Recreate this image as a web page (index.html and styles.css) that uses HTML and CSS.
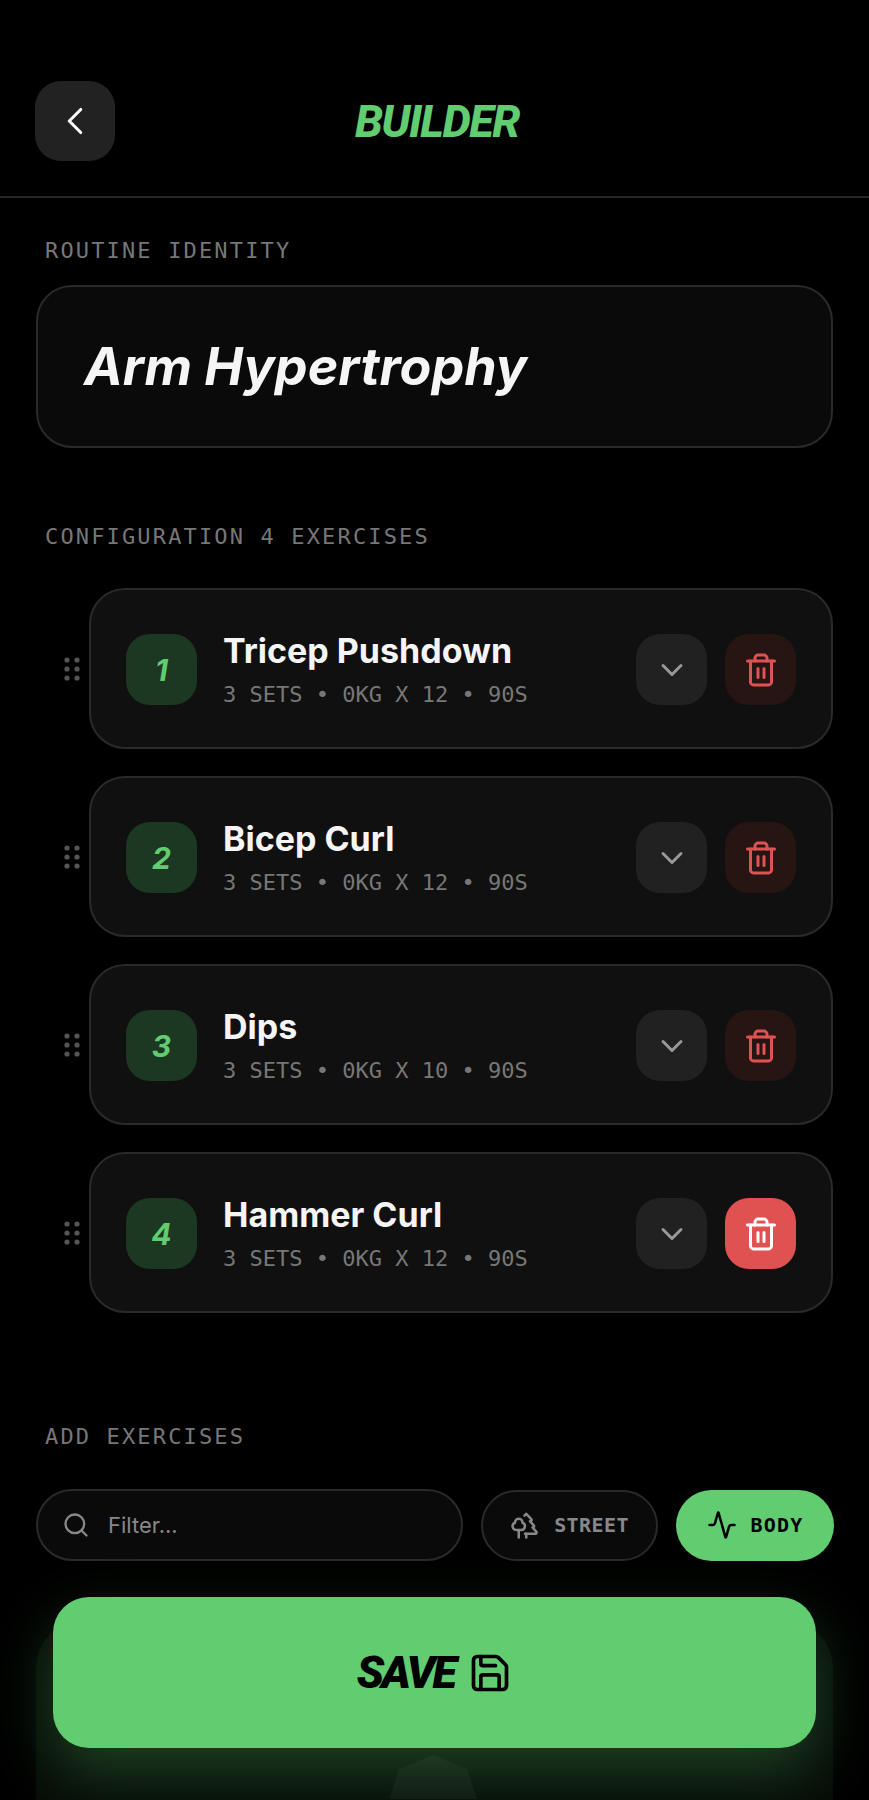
FILE: index.html
```html
<!DOCTYPE html>
<html lang="en">
  <head>
    <meta charset="UTF-8" />
    <meta name="viewport" content="width=device-width, initial-scale=1.0" />
    <title>Builder</title>
    <link rel="stylesheet" href="styles.css">
  </head>
  <body>
    <div class="page">
      <header class="top-bar">
        <button class="back-btn">
          <svg class="icon" width="46" height="46" viewBox="0 0 24 24"><path d="m15 18-6-6 6-6" /></svg>
        </button>
        <h1 class="brand">BUILDER</h1>
      </header>

      <main class="content">
        <div class="label label-routine">ROUTINE IDENTITY</div>
        <div class="identity"><span class="identity-name">Arm Hypertrophy</span></div>

        <div class="label label-config">CONFIGURATION 4 EXERCISES</div>
        <div class="exercise-list">
          <div class="exercise-row">
            <div class="grip">
              <svg width="16" height="24" viewBox="0 0 16 24"><circle cx="3" cy="3" r="2.6" /><circle cx="13" cy="3" r="2.6" /><circle cx="3" cy="12" r="2.6" /><circle cx="13" cy="12" r="2.6" /><circle cx="3" cy="21" r="2.6" /><circle cx="13" cy="21" r="2.6" /></svg>
            </div>
            <div class="exercise-card">
              <div class="num">1</div>
              <div class="exercise-info">
                <div class="exercise-name">Tricep Pushdown</div>
                <div class="exercise-meta">3 SETS • 0KG X 12 • 90S</div>
              </div>
              <button class="square-btn expand"><svg class="icon" width="36" height="36" viewBox="0 0 24 24"><path d="m6 9 6 6 6-6" /></svg></button>
              <button class="square-btn trash"><svg class="icon" width="36" height="36" viewBox="0 0 24 24"><path d="M3 6h18" /><path d="M19 6v14c0 1-1 2-2 2H7c-1 0-2-1-2-2V6" /><path d="M8 6V4c0-1 1-2 2-2h4c1 0 2 1 2 2v2" /><path d="M10 11v6" /><path d="M14 11v6" /></svg></button>
            </div>
          </div>
          <div class="exercise-row">
            <div class="grip">
              <svg width="16" height="24" viewBox="0 0 16 24"><circle cx="3" cy="3" r="2.6" /><circle cx="13" cy="3" r="2.6" /><circle cx="3" cy="12" r="2.6" /><circle cx="13" cy="12" r="2.6" /><circle cx="3" cy="21" r="2.6" /><circle cx="13" cy="21" r="2.6" /></svg>
            </div>
            <div class="exercise-card">
              <div class="num">2</div>
              <div class="exercise-info">
                <div class="exercise-name">Bicep Curl</div>
                <div class="exercise-meta">3 SETS • 0KG X 12 • 90S</div>
              </div>
              <button class="square-btn expand"><svg class="icon" width="36" height="36" viewBox="0 0 24 24"><path d="m6 9 6 6 6-6" /></svg></button>
              <button class="square-btn trash"><svg class="icon" width="36" height="36" viewBox="0 0 24 24"><path d="M3 6h18" /><path d="M19 6v14c0 1-1 2-2 2H7c-1 0-2-1-2-2V6" /><path d="M8 6V4c0-1 1-2 2-2h4c1 0 2 1 2 2v2" /><path d="M10 11v6" /><path d="M14 11v6" /></svg></button>
            </div>
          </div>
          <div class="exercise-row">
            <div class="grip">
              <svg width="16" height="24" viewBox="0 0 16 24"><circle cx="3" cy="3" r="2.6" /><circle cx="13" cy="3" r="2.6" /><circle cx="3" cy="12" r="2.6" /><circle cx="13" cy="12" r="2.6" /><circle cx="3" cy="21" r="2.6" /><circle cx="13" cy="21" r="2.6" /></svg>
            </div>
            <div class="exercise-card">
              <div class="num">3</div>
              <div class="exercise-info">
                <div class="exercise-name">Dips</div>
                <div class="exercise-meta">3 SETS • 0KG X 10 • 90S</div>
              </div>
              <button class="square-btn expand"><svg class="icon" width="36" height="36" viewBox="0 0 24 24"><path d="m6 9 6 6 6-6" /></svg></button>
              <button class="square-btn trash"><svg class="icon" width="36" height="36" viewBox="0 0 24 24"><path d="M3 6h18" /><path d="M19 6v14c0 1-1 2-2 2H7c-1 0-2-1-2-2V6" /><path d="M8 6V4c0-1 1-2 2-2h4c1 0 2 1 2 2v2" /><path d="M10 11v6" /><path d="M14 11v6" /></svg></button>
            </div>
          </div>
          <div class="exercise-row">
            <div class="grip">
              <svg width="16" height="24" viewBox="0 0 16 24"><circle cx="3" cy="3" r="2.6" /><circle cx="13" cy="3" r="2.6" /><circle cx="3" cy="12" r="2.6" /><circle cx="13" cy="12" r="2.6" /><circle cx="3" cy="21" r="2.6" /><circle cx="13" cy="21" r="2.6" /></svg>
            </div>
            <div class="exercise-card">
              <div class="num">4</div>
              <div class="exercise-info">
                <div class="exercise-name">Hammer Curl</div>
                <div class="exercise-meta">3 SETS • 0KG X 12 • 90S</div>
              </div>
              <button class="square-btn expand"><svg class="icon" width="36" height="36" viewBox="0 0 24 24"><path d="m6 9 6 6 6-6" /></svg></button>
              <button class="square-btn trash active"><svg class="icon" width="36" height="36" viewBox="0 0 24 24"><path d="M3 6h18" /><path d="M19 6v14c0 1-1 2-2 2H7c-1 0-2-1-2-2V6" /><path d="M8 6V4c0-1 1-2 2-2h4c1 0 2 1 2 2v2" /><path d="M10 11v6" /><path d="M14 11v6" /></svg></button>
            </div>
          </div>
        </div>

        <div class="label label-add">ADD EXERCISES</div>
        <div class="filter-row">
          <div class="filter-input">
            <svg class="icon" width="28" height="28" viewBox="0 0 24 24"><circle cx="11" cy="11" r="8" /><path d="m21 21-4.3-4.3" /></svg>
            <span>Filter...</span>
          </div>
          <button class="pill street">
            <svg class="icon" width="30" height="30" viewBox="0 0 24 24"><path d="M10 10v.2A3 3 0 0 1 8.9 16H5a3 3 0 0 1-1-5.8V10a3 3 0 0 1 6 0Z" /><path d="M7 16v6" /><path d="M13 19v3" /><path d="M12 19h8.3a1 1 0 0 0 .7-1.7L18 14h.3a1 1 0 0 0 .7-1.7L16 9h.2a1 1 0 0 0 .8-1.7L13 3l-1.4 1.5" /></svg>
            STREET
          </button>
          <button class="pill body-pill">
            <svg class="icon" width="30" height="30" viewBox="0 0 24 24"><path d="M22 12h-2.48a2 2 0 0 0-1.93 1.46l-2.35 8.36a.25.25 0 0 1-.48 0L9.24 2.18a.25.25 0 0 0-.48 0l-2.35 8.36A2 2 0 0 1 4.49 12H2" /></svg>
            BODY
          </button>
        </div>
      </main>

      <!-- card peeking out behind the save button -->
      <div class="ghost-card">
        <svg class="ghost-figure" width="88" height="44" viewBox="0 0 88 44"><polygon points="44,0 78,14 88,44 0,44 10,14" /></svg>
      </div>

      <button class="save-btn">
        <span>SAVE</span>
        <svg class="icon" width="44" height="44" viewBox="0 0 24 24"><path d="M15.2 3a2 2 0 0 1 1.4.6l3.8 3.8a2 2 0 0 1 .6 1.4V19a2 2 0 0 1-2 2H5a2 2 0 0 1-2-2V5a2 2 0 0 1 2-2z" /><path d="M17 21v-7a1 1 0 0 0-1-1H8a1 1 0 0 0-1 1v7" /><path d="M7 3v4a1 1 0 0 0 1 1h7" /></svg>
      </button>
    </div>
  </body>
</html>
```

FILE: styles.css
```css
* {
  box-sizing: border-box;
}
body {
  margin: 0;
  background-color: #000;
  color: #fff;
  font-family: "Inter", sans-serif;
}
button {
  border: none;
  padding: 0;
  cursor: pointer;
  font-family: inherit;
}
h1 {
  margin: 0;
}
.icon {
  fill: none;
  stroke: currentColor;
  stroke-width: 2;
  stroke-linecap: round;
  stroke-linejoin: round;
  flex-shrink: 0;
}
.page {
  position: relative;
  height: 1800px;
  overflow: hidden;
}

/* header */
.top-bar {
  display: flex;
  align-items: center;
  height: 198px;
  padding: 45px 36px 0 35px;
  border-bottom: 2px solid #262626;
}
.back-btn {
  display: flex;
  align-items: center;
  justify-content: center;
  width: 80px;
  height: 80px;
  border-radius: 26px;
  background-color: #222;
  color: #fff;
}
.back-btn .icon {
  stroke-width: 1.6;
}
.brand {
  flex: 1;
  padding-top: 2px;
  padding-right: 74px;
  text-align: center;
  font-family: "Roboto", sans-serif;
  font-size: 45px;
  font-style: italic;
  font-weight: 800;
  letter-spacing: -1.5px;
  color: #62cc70;
}

/* sections */
.content {
  padding: 0 36px;
}
.label {
  padding-left: 9px;
  font-family: "DejaVu Sans Mono", monospace;
  font-size: 22px;
  line-height: 26px;
  letter-spacing: 2.15px;
  color: #777;
}
.label-routine {
  margin-top: 40px;
}
.label-config {
  margin-top: 76px;
}
.label-add {
  margin-top: 111px;
}
.identity {
  display: flex;
  align-items: center;
  height: 163px;
  margin-top: 21px;
  padding-left: 46px;
  border: 2px solid #2a2a2a;
  border-radius: 36px;
  background-color: #0a0a0a;
}
.identity-name {
  font-size: 52px;
  font-style: italic;
  font-weight: 700;
  color: #f5f5f5;
}

/* exercise list */
.exercise-list {
  display: flex;
  flex-direction: column;
  gap: 27px;
  margin-top: 38px;
}
.exercise-row {
  display: flex;
  align-items: center;
}
.grip {
  display: flex;
  justify-content: flex-end;
  width: 53px;
  padding-right: 9px;
}
.grip svg {
  fill: #555;
}
.exercise-card {
  flex: 1;
  display: flex;
  align-items: center;
  height: 161px;
  padding: 2px 35px 0;
  border: 2px solid #2a2a2a;
  border-radius: 36px;
  background-color: #101010;
}
.num {
  display: flex;
  align-items: center;
  justify-content: center;
  width: 71px;
  height: 71px;
  border-radius: 24px;
  background-color: #1c3822;
  color: #62cc70;
  font-size: 30px;
  font-style: italic;
  font-weight: 700;
}
.exercise-info {
  flex: 1;
  margin-left: 26px;
  padding-top: 2px;
}
.exercise-name {
  margin-top: -3px;
  font-size: 34px;
  font-weight: 700;
  line-height: 42px;
  color: #f5f5f5;
}
.exercise-meta {
  margin-top: 10px;
  font-family: "DejaVu Sans Mono", monospace;
  font-size: 22px;
  line-height: 26px;
  color: #777;
}
.square-btn {
  display: flex;
  align-items: center;
  justify-content: center;
  width: 71px;
  height: 71px;
  border-radius: 24px;
}
.expand {
  background-color: #212121;
  color: #999;
}
.trash {
  margin-left: 18px;
  background-color: #271514;
  color: #e05252;
}
.trash.active {
  background-color: #e05252;
  color: #fff;
}

/* filter row */
.filter-row {
  display: flex;
  align-items: center;
  gap: 18px;
  margin-top: 39px;
  margin-right: -1px;
}
.filter-input {
  flex: 1;
  display: flex;
  align-items: center;
  gap: 18px;
  height: 72px;
  padding-left: 24px;
  border: 2px solid #2a2a2a;
  border-radius: 36px;
  background-color: #0a0a0a;
  color: #888;
  font-size: 22px;
}
.pill {
  display: flex;
  align-items: center;
  justify-content: center;
  gap: 14px;
  height: 71px;
  border-radius: 36px;
  font-family: "DejaVu Sans Mono", monospace;
  font-size: 20px;
  font-weight: 700;
}
.street {
  width: 177px;
  border: 2px solid #2a2a2a;
  background-color: #0a0a0a;
  color: #888;
  letter-spacing: 0.4px;
}
.body-pill {
  width: 158px;
  background-color: #62cc70;
  color: #000;
  letter-spacing: 1.2px;
}

/* save */
.ghost-card {
  position: absolute;
  left: 36px;
  right: 36px;
  top: 1620px;
  height: 240px;
  border-radius: 48px;
  background-color: rgba(98, 204, 112, 0.06);
}
.ghost-figure {
  position: absolute;
  left: 353px;
  top: 135px;
  fill: rgba(255, 255, 255, 0.04);
}
.save-btn {
  position: absolute;
  left: 53px;
  top: 1597px;
  display: flex;
  align-items: center;
  justify-content: center;
  gap: 14px;
  width: 763px;
  height: 151px;
  border-radius: 36px;
  background-color: #62cc70;
  box-shadow: 0 24px 60px rgba(98, 204, 112, 0.28);
  color: #000;
  font-family: "Roboto", sans-serif;
  font-size: 45px;
  font-style: italic;
  font-weight: 900;
  letter-spacing: -2.8px;
}
```
